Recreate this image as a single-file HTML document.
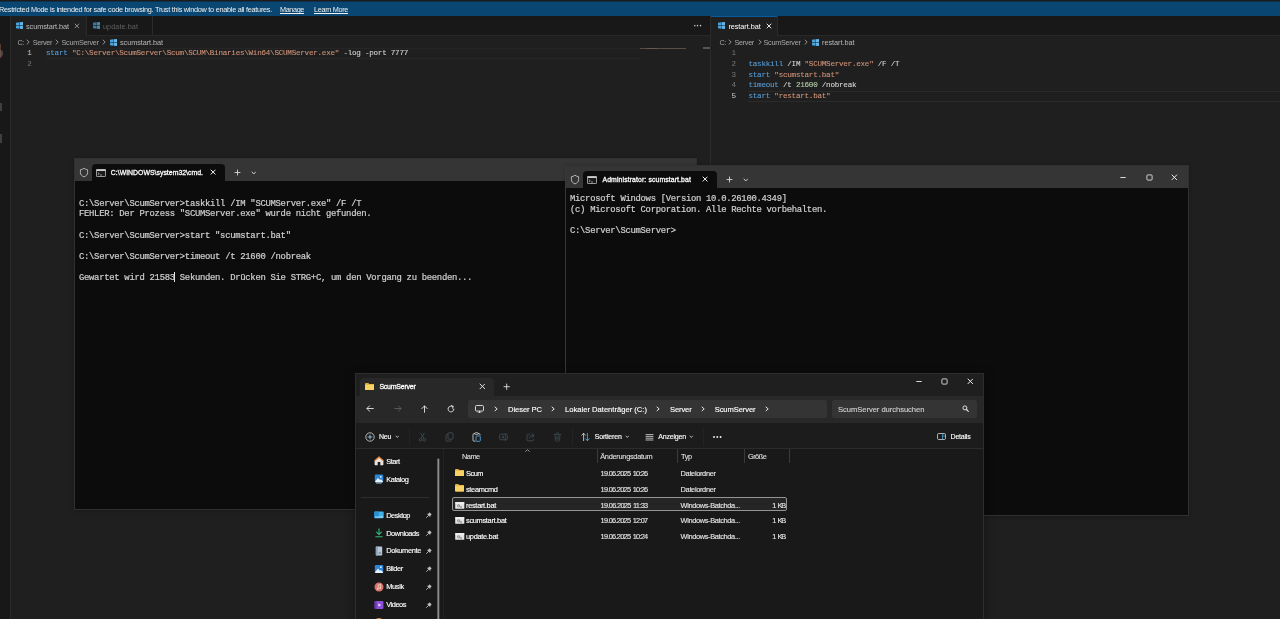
<!DOCTYPE html>
<html lang="de"><head><meta charset="utf-8"><title>ScumServer</title>
<style>
html,body{margin:0;padding:0;background:#1f1f1f;overflow:hidden}
body{position:relative;width:1280px;height:619px;overflow:hidden;font-family:'Liberation Sans', sans-serif}
div,svg,span.t{position:absolute;display:block}
span.t{white-space:pre}
#w{left:0;top:0;width:1280px;height:619px;will-change:transform}
</style></head><body><div id="w">
<div style="left:0px;top:0px;width:1280px;height:619px;background:#1f1f1f;"></div>
<div style="left:0px;top:0px;width:1280px;height:2px;background:#1b1b1b;"></div>
<div style="left:0px;top:1px;width:1280px;height:1px;background:#11304b;"></div>
<div style="left:0px;top:2px;width:1280px;height:14px;background:#094671;"></div>
<div style="left:0px;top:16px;width:10px;height:603px;background:#181818;"></div>
<div style="left:10px;top:16px;width:1px;height:603px;background:#2b2b2b;"></div>
<div style="left:0px;top:50px;width:3px;height:7px;background:#8a8a8a;border-radius:0 3px 3px 0;opacity:.4"></div>
<div style="left:0px;top:103px;width:2px;height:8px;background:#8a8a8a;opacity:.35"></div>
<div style="left:0px;top:134px;width:2px;height:9px;background:#8a8a8a;opacity:.35"></div>
<div style="left:0px;top:44px;width:1px;height:14px;background:#9a5a50;opacity:.5"></div>
<div style="left:11px;top:16px;width:1269px;height:19px;background:#181818;"></div>
<div style="left:11px;top:35px;width:1269px;height:1px;background:#282828;"></div>
<div style="left:11px;top:16px;width:75px;height:20px;background:#1f1f1f;"></div>
<div style="left:86px;top:16px;width:1px;height:19px;background:#2b2b2b;"></div>
<div style="left:152px;top:16px;width:1px;height:19px;background:#2b2b2b;"></div>
<div style="left:710px;top:16px;width:1px;height:603px;background:#2b2b2b;"></div>
<div style="left:711px;top:16px;width:66px;height:20px;background:#1f1f1f;"></div>
<div style="left:711px;top:16px;width:66px;height:1px;background:#0a5a9e;"></div>
<div style="left:777px;top:16px;width:1px;height:19px;background:#2b2b2b;"></div>
<div style="left:46px;top:47.5px;width:595px;height:1px;background:#252525;"></div>
<div style="left:46px;top:58px;width:595px;height:1px;background:#262626;"></div>
<div style="left:748px;top:90.5px;width:532px;height:1px;background:#2a2a2a;"></div>
<div style="left:748px;top:101px;width:532px;height:1px;background:#2a2a2a;"></div>
<div style="left:640px;top:48px;width:46px;height:1px;background:#5a4d48;"></div>
<div style="left:647px;top:48px;width:10px;height:1px;background:#6a5a52;"></div>
<div style="left:703px;top:47px;width:7px;height:2px;background:#555;"></div>
<span id="t0" class="t" style="left:-1px;top:5.44px;font-family:'Liberation Sans', sans-serif;font-size:7.3px;line-height:9.12px;color:#f0f0f0;letter-spacing:-0.2658px;">Restricted Mode is intended for safe code browsing. Trust this window to enable all features.</span>
<span id="t1" class="t" style="left:280px;top:5.44px;font-family:'Liberation Sans', sans-serif;font-size:7.3px;line-height:9.12px;color:#f0f0f0;letter-spacing:-0.3958px;text-decoration:underline;text-decoration-thickness:0.6px;text-underline-offset:0.8px;">Manage</span>
<span id="t2" class="t" style="left:314px;top:5.44px;font-family:'Liberation Sans', sans-serif;font-size:7.3px;line-height:9.12px;color:#f0f0f0;letter-spacing:-0.3328px;text-decoration:underline;text-decoration-thickness:0.6px;text-underline-offset:0.8px;">Learn More</span>
<svg style="left:16px;top:22.2px;opacity:1" width="7" height="7" viewBox="0 0 7 7"><path d="M0 0.84 L3.32 0.35000000000000003 V3.32 H0Z" fill="#4aa3dc"/><path d="M3.68 0.28 L7 0 V3.32 H3.68Z" fill="#62b6ea"/><path d="M0 3.68 H3.32 V6.6499999999999995 L0 6.16Z" fill="#4aa3dc"/><path d="M3.68 3.68 H7 V7 L3.68 6.72Z" fill="#62b6ea"/></svg>
<span id="t3" class="t" style="left:26px;top:22.44px;font-family:'Liberation Sans', sans-serif;font-size:7.3px;line-height:9.12px;color:#bdbdbd;letter-spacing:-0.0613px;">scumstart.bat</span>
<svg style="left:74.39999999999999px;top:23.400000000000002px;" width="5.8" height="5.8" viewBox="0 0 5.8 5.8"><path d="M1 1L4.8 4.8M4.8 1L1 4.8" stroke="#a8a8a8" stroke-width="0.8" fill="none" stroke-linecap="round"/></svg>
<svg style="left:93px;top:22.2px;opacity:0.7" width="7" height="7" viewBox="0 0 7 7"><path d="M0 0.84 L3.32 0.35000000000000003 V3.32 H0Z" fill="#4aa3dc"/><path d="M3.68 0.28 L7 0 V3.32 H3.68Z" fill="#62b6ea"/><path d="M0 3.68 H3.32 V6.6499999999999995 L0 6.16Z" fill="#4aa3dc"/><path d="M3.68 3.68 H7 V7 L3.68 6.72Z" fill="#62b6ea"/></svg>
<span id="t4" class="t" style="left:103px;top:22.44px;font-family:'Liberation Sans', sans-serif;font-size:7.3px;line-height:9.12px;color:#5f5f5f;letter-spacing:0.0500px;">update.bat</span>
<span id="t5" class="t" style="left:693.5px;top:20.88px;font-family:'Liberation Sans', sans-serif;font-size:9px;line-height:11.25px;color:#cccccc;font-weight:700;letter-spacing:-0.1667px;">···</span>
<svg style="left:718px;top:22.2px;opacity:1" width="7" height="7" viewBox="0 0 7 7"><path d="M0 0.84 L3.32 0.35000000000000003 V3.32 H0Z" fill="#4aa3dc"/><path d="M3.68 0.28 L7 0 V3.32 H3.68Z" fill="#62b6ea"/><path d="M0 3.68 H3.32 V6.6499999999999995 L0 6.16Z" fill="#4aa3dc"/><path d="M3.68 3.68 H7 V7 L3.68 6.72Z" fill="#62b6ea"/></svg>
<span id="t6" class="t" style="left:728.4px;top:22.44px;font-family:'Liberation Sans', sans-serif;font-size:7.3px;line-height:9.12px;color:#ffffff;letter-spacing:-0.0509px;">restart.bat</span>
<svg style="left:766.0px;top:23.3px;" width="6.0" height="6.0" viewBox="0 0 6.0 6.0"><path d="M1 1L5.0 5.0M5.0 1L1 5.0" stroke="#ffffff" stroke-width="0.9" fill="none" stroke-linecap="round"/></svg>
<span id="t7" class="t" style="left:17.5px;top:38.44px;font-family:'Liberation Sans', sans-serif;font-size:7.3px;line-height:9.12px;color:#a6a6a6;letter-spacing:-0.4062px;">C:</span>
<svg style="left:25.599999999999998px;top:39.1px;" width="4.2" height="6.2" viewBox="0 0 4.2 6.2"><path d="M1 1L3.2 3.1L1 5.2" stroke="#a6a6a6" stroke-width="0.85" fill="none" stroke-linecap="round" stroke-linejoin="round"/></svg>
<span id="t8" class="t" style="left:32.7px;top:38.44px;font-family:'Liberation Sans', sans-serif;font-size:7.3px;line-height:9.12px;color:#a6a6a6;letter-spacing:-0.3667px;">Server</span>
<svg style="left:54.9px;top:39.1px;" width="4.2" height="6.2" viewBox="0 0 4.2 6.2"><path d="M1 1L3.2 3.1L1 5.2" stroke="#a6a6a6" stroke-width="0.85" fill="none" stroke-linecap="round" stroke-linejoin="round"/></svg>
<span id="t9" class="t" style="left:61.5px;top:38.44px;font-family:'Liberation Sans', sans-serif;font-size:7.3px;line-height:9.12px;color:#a6a6a6;letter-spacing:-0.2856px;">ScumServer</span>
<svg style="left:101.60000000000001px;top:39.1px;" width="4.2" height="6.2" viewBox="0 0 4.2 6.2"><path d="M1 1L3.2 3.1L1 5.2" stroke="#a6a6a6" stroke-width="0.85" fill="none" stroke-linecap="round" stroke-linejoin="round"/></svg>
<svg style="left:109.5px;top:38.7px;opacity:1" width="7" height="7" viewBox="0 0 7 7"><path d="M0 0.84 L3.32 0.35000000000000003 V3.32 H0Z" fill="#4aa3dc"/><path d="M3.68 0.28 L7 0 V3.32 H3.68Z" fill="#62b6ea"/><path d="M0 3.68 H3.32 V6.6499999999999995 L0 6.16Z" fill="#4aa3dc"/><path d="M3.68 3.68 H7 V7 L3.68 6.72Z" fill="#62b6ea"/></svg>
<span id="t10" class="t" style="left:120px;top:38.44px;font-family:'Liberation Sans', sans-serif;font-size:7.3px;line-height:9.12px;color:#b8b8b8;letter-spacing:-0.0613px;">scumstart.bat</span>
<span id="t11" class="t" style="left:719.4px;top:38.44px;font-family:'Liberation Sans', sans-serif;font-size:7.3px;line-height:9.12px;color:#a6a6a6;letter-spacing:-0.5062px;">C:</span>
<svg style="left:727.9px;top:39.1px;" width="4.2" height="6.2" viewBox="0 0 4.2 6.2"><path d="M1 1L3.2 3.1L1 5.2" stroke="#a6a6a6" stroke-width="0.85" fill="none" stroke-linecap="round" stroke-linejoin="round"/></svg>
<span id="t12" class="t" style="left:734.4px;top:38.44px;font-family:'Liberation Sans', sans-serif;font-size:7.3px;line-height:9.12px;color:#a6a6a6;letter-spacing:-0.3167px;">Server</span>
<svg style="left:757.6px;top:39.1px;" width="4.2" height="6.2" viewBox="0 0 4.2 6.2"><path d="M1 1L3.2 3.1L1 5.2" stroke="#a6a6a6" stroke-width="0.85" fill="none" stroke-linecap="round" stroke-linejoin="round"/></svg>
<span id="t13" class="t" style="left:763.5px;top:38.44px;font-family:'Liberation Sans', sans-serif;font-size:7.3px;line-height:9.12px;color:#a6a6a6;letter-spacing:-0.3056px;">ScumServer</span>
<svg style="left:803.9px;top:39.1px;" width="4.2" height="6.2" viewBox="0 0 4.2 6.2"><path d="M1 1L3.2 3.1L1 5.2" stroke="#a6a6a6" stroke-width="0.85" fill="none" stroke-linecap="round" stroke-linejoin="round"/></svg>
<svg style="left:812px;top:38.7px;opacity:1" width="7" height="7" viewBox="0 0 7 7"><path d="M0 0.84 L3.32 0.35000000000000003 V3.32 H0Z" fill="#4aa3dc"/><path d="M3.68 0.28 L7 0 V3.32 H3.68Z" fill="#62b6ea"/><path d="M0 3.68 H3.32 V6.6499999999999995 L0 6.16Z" fill="#4aa3dc"/><path d="M3.68 3.68 H7 V7 L3.68 6.72Z" fill="#62b6ea"/></svg>
<span id="t14" class="t" style="left:822px;top:38.44px;font-family:'Liberation Sans', sans-serif;font-size:7.3px;line-height:9.12px;color:#b8b8b8;letter-spacing:-0.0327px;">restart.bat</span>
<span id="t15" class="t" style="right:1248.2px;top:49.45px;font-family:'Liberation Mono', monospace;font-size:7.6px;line-height:9.5px;color:#cccccc;">1</span>
<span id="t16" class="t" style="right:1248.2px;top:60.15px;font-family:'Liberation Mono', monospace;font-size:7.6px;line-height:9.5px;color:#777777;">2</span>
<span id="t17" class="t" style="left:46px;top:49.45px;font-family:'Liberation Mono', monospace;font-size:7.6px;line-height:9.5px;color:#d4d4d4;letter-spacing:-0.2475px;-webkit-text-stroke:0.1px;"><span style="color:#569cd6">start</span> <span style="color:#ce9178">"C:\Server\ScumServer\Scum\SCUM\Binaries\Win64\SCUMServer.exe"</span> -log -port 7777</span>
<span id="t18" class="t" style="right:544px;top:49.45px;font-family:'Liberation Mono', monospace;font-size:7.6px;line-height:9.5px;color:#777777;">1</span>
<span id="t19" class="t" style="right:544px;top:60.09px;font-family:'Liberation Mono', monospace;font-size:7.6px;line-height:9.5px;color:#777777;">2</span>
<span id="t20" class="t" style="right:544px;top:70.73px;font-family:'Liberation Mono', monospace;font-size:7.6px;line-height:9.5px;color:#777777;">3</span>
<span id="t21" class="t" style="right:544px;top:81.37px;font-family:'Liberation Mono', monospace;font-size:7.6px;line-height:9.5px;color:#777777;">4</span>
<span id="t22" class="t" style="right:544px;top:92.01px;font-family:'Liberation Mono', monospace;font-size:7.6px;line-height:9.5px;color:#cccccc;">5</span>
<span id="t23" class="t" style="left:748.5px;top:60.09px;font-family:'Liberation Mono', monospace;font-size:7.6px;line-height:9.5px;color:#d4d4d4;letter-spacing:-0.2480px;-webkit-text-stroke:0.1px;"><span style="color:#569cd6">taskkill</span> /IM <span style="color:#ce9178">"SCUMServer.exe"</span> /F /T</span>
<span id="t24" class="t" style="left:748.5px;top:70.73px;font-family:'Liberation Mono', monospace;font-size:7.6px;line-height:9.5px;color:#d4d4d4;letter-spacing:-0.2480px;-webkit-text-stroke:0.1px;"><span style="color:#569cd6">start</span> <span style="color:#ce9178">"scumstart.bat"</span></span>
<span id="t25" class="t" style="left:748.5px;top:81.37px;font-family:'Liberation Mono', monospace;font-size:7.6px;line-height:9.5px;color:#d4d4d4;letter-spacing:-0.2481px;-webkit-text-stroke:0.1px;"><span style="color:#569cd6">timeout</span> /t <span style="color:#b5cea8">21600</span> /nobreak</span>
<span id="t26" class="t" style="left:748.5px;top:92.01px;font-family:'Liberation Mono', monospace;font-size:7.6px;line-height:9.5px;color:#d4d4d4;letter-spacing:-0.2484px;-webkit-text-stroke:0.1px;"><span style="color:#569cd6">start</span> <span style="color:#ce9178">"restart.bat"</span></span>
<div style="left:74px;top:158px;width:623px;height:352px;background:#0c0c0c;box-shadow:0 0 0 1px #303030 inset, 0 1px 4px rgba(0,0,0,.2)"></div>
<div style="left:75px;top:159px;width:621px;height:22px;background:#353535;"></div>
<div style="left:92px;top:164px;width:133px;height:17.5px;background:#0c0c0c;border-radius:4px 4px 0 0"></div>
<svg style="left:78.8px;top:167.0px;" width="10" height="11" viewBox="0 0 10 11"><path d="M5 1.2C6.2 2.2 7.4 2.6 8.6 2.7V5.6C8.6 7.7 7.1 9.1 5 9.9C2.9 9.1 1.4 7.7 1.4 5.6V2.7C2.6 2.6 3.8 2.2 5 1.2Z" stroke="#d0d0d0" stroke-width="0.8" fill="none" stroke-linejoin="round"/></svg>
<svg style="left:96.2px;top:168.7px;" width="10" height="8" viewBox="0 0 10 8"><rect x="0.4" y="0.4" width="9.2" height="7.2" rx="0.8" fill="#1a1a1a" stroke="#cfcfcf" stroke-width="0.8"/><rect x="0.4" y="0.4" width="9.2" height="1.6" fill="#cfcfcf"/><path d="M1.8 3.6L3.3 4.7L1.8 5.8M4 6H6" stroke="#e0e0e0" stroke-width="0.6" fill="none"/></svg>
<span id="t27" class="t" style="left:110.8px;top:169.19px;font-family:'Liberation Sans', sans-serif;font-size:6.9px;line-height:8.62px;color:#ffffff;letter-spacing:0.0129px;-webkit-text-stroke:0.28px #fff;">C:\WINDOWS\system32\cmd.</span>
<svg style="left:210.20000000000002px;top:169.4px;" width="6.2" height="6.2" viewBox="0 0 6.2 6.2"><path d="M1 1L5.2 5.2M5.2 1L1 5.2" stroke="#f4f4f4" stroke-width="1.0" fill="none" stroke-linecap="round"/></svg>
<svg style="left:233.5px;top:169.0px;" width="7.0" height="7.0" viewBox="0 0 7.0 7.0"><path d="M3.5 1V6.0M1 3.5H6.0" stroke="#d8d8d8" stroke-width="0.9" fill="none" stroke-linecap="round"/></svg>
<svg style="left:250.79999999999998px;top:170.8px;" width="5.6" height="4.0" viewBox="0 0 5.6 4.0"><path d="M1 1L2.8 3.0L4.6 1" stroke="#d8d8d8" stroke-width="0.9" fill="none" stroke-linecap="round" stroke-linejoin="round"/></svg>
<span id="t28" class="t" style="left:79px;top:198.74px;font-family:'Liberation Mono', monospace;font-size:8.9px;line-height:11.12px;color:#d0d0d0;letter-spacing:-0.2859px;-webkit-text-stroke:0.2px #d0d0d0;">C:\Server\ScumServer&gt;taskkill /IM "SCUMServer.exe" /F /T</span>
<span id="t29" class="t" style="left:79px;top:209.34px;font-family:'Liberation Mono', monospace;font-size:8.9px;line-height:11.12px;color:#d0d0d0;letter-spacing:-0.2860px;-webkit-text-stroke:0.2px #d0d0d0;">FEHLER: Der Prozess "SCUMServer.exe" wurde nicht gefunden.</span>
<span id="t30" class="t" style="left:79px;top:230.54px;font-family:'Liberation Mono', monospace;font-size:8.9px;line-height:11.12px;color:#d0d0d0;letter-spacing:-0.2859px;-webkit-text-stroke:0.2px #d0d0d0;">C:\Server\ScumServer&gt;start "scumstart.bat"</span>
<span id="t31" class="t" style="left:79px;top:251.74px;font-family:'Liberation Mono', monospace;font-size:8.9px;line-height:11.12px;color:#d0d0d0;letter-spacing:-0.2861px;-webkit-text-stroke:0.2px #d0d0d0;">C:\Server\ScumServer&gt;timeout /t 21600 /nobreak</span>
<span id="t32" class="t" style="left:79px;top:272.94px;font-family:'Liberation Mono', monospace;font-size:8.9px;line-height:11.12px;color:#d0d0d0;letter-spacing:-0.2859px;-webkit-text-stroke:0.2px #d0d0d0;">Gewartet wird 21583 Sekunden. Drücken Sie STRG+C, um den Vorgang zu beenden...</span>
<div style="left:174.3px;top:271.5px;width:1px;height:10.5px;background:#e6e6e6;"></div>
<div style="left:565px;top:165px;width:624px;height:351px;background:#0c0c0c;box-shadow:0 0 0 1px #303030 inset, 0 1px 4px rgba(0,0,0,.2)"></div>
<div style="left:566px;top:166px;width:622px;height:22px;background:#353535;"></div>
<div style="left:583px;top:171px;width:134px;height:17.5px;background:#0c0c0c;border-radius:4px 4px 0 0"></div>
<svg style="left:569.8px;top:174.0px;" width="10" height="11" viewBox="0 0 10 11"><path d="M5 1.2C6.2 2.2 7.4 2.6 8.6 2.7V5.6C8.6 7.7 7.1 9.1 5 9.9C2.9 9.1 1.4 7.7 1.4 5.6V2.7C2.6 2.6 3.8 2.2 5 1.2Z" stroke="#d0d0d0" stroke-width="0.8" fill="none" stroke-linejoin="round"/></svg>
<svg style="left:587.2px;top:175.7px;" width="10" height="8" viewBox="0 0 10 8"><rect x="0.4" y="0.4" width="9.2" height="7.2" rx="0.8" fill="#1a1a1a" stroke="#cfcfcf" stroke-width="0.8"/><rect x="0.4" y="0.4" width="9.2" height="1.6" fill="#cfcfcf"/><path d="M1.8 3.6L3.3 4.7L1.8 5.8M4 6H6" stroke="#e0e0e0" stroke-width="0.6" fill="none"/></svg>
<span id="t33" class="t" style="left:602.5px;top:176.19px;font-family:'Liberation Sans', sans-serif;font-size:6.9px;line-height:8.62px;color:#ffffff;letter-spacing:0.0971px;-webkit-text-stroke:0.28px #fff;">Administrator: scumstart.bat</span>
<svg style="left:702.1999999999999px;top:176.4px;" width="6.2" height="6.2" viewBox="0 0 6.2 6.2"><path d="M1 1L5.2 5.2M5.2 1L1 5.2" stroke="#f4f4f4" stroke-width="1.0" fill="none" stroke-linecap="round"/></svg>
<svg style="left:725.5px;top:176.0px;" width="7.0" height="7.0" viewBox="0 0 7.0 7.0"><path d="M3.5 1V6.0M1 3.5H6.0" stroke="#d8d8d8" stroke-width="0.9" fill="none" stroke-linecap="round"/></svg>
<svg style="left:742.8000000000001px;top:177.8px;" width="5.6" height="4.0" viewBox="0 0 5.6 4.0"><path d="M1 1L2.8 3.0L4.6 1" stroke="#d8d8d8" stroke-width="0.9" fill="none" stroke-linecap="round" stroke-linejoin="round"/></svg>
<span id="t34" class="t" style="left:570px;top:194.34px;font-family:'Liberation Mono', monospace;font-size:8.9px;line-height:11.12px;color:#d0d0d0;letter-spacing:-0.2859px;-webkit-text-stroke:0.2px #d0d0d0;">Microsoft Windows [Version 10.0.26100.4349]</span>
<span id="t35" class="t" style="left:570px;top:204.94px;font-family:'Liberation Mono', monospace;font-size:8.9px;line-height:11.12px;color:#d0d0d0;letter-spacing:-0.2860px;-webkit-text-stroke:0.2px #d0d0d0;">(c) Microsoft Corporation. Alle Rechte vorbehalten.</span>
<span id="t36" class="t" style="left:570px;top:226.14px;font-family:'Liberation Mono', monospace;font-size:8.9px;line-height:11.12px;color:#d0d0d0;letter-spacing:-0.2859px;-webkit-text-stroke:0.2px #d0d0d0;">C:\Server\ScumServer&gt;</span>
<svg style="left:1120px;top:176.5px;" width="6" height="1" viewBox="0 0 6 1"><rect x="0.3" width="5.4" height="0.9" fill="#ececec"/></svg>
<svg style="left:1145.5px;top:173.5px;" width="7" height="7" viewBox="0 0 7 7"><rect x="0.9" y="0.9" width="5.2" height="5.2" rx="0.9" stroke="#ececec" stroke-width="0.85" fill="none"/></svg>
<svg style="left:1171.3500000000001px;top:173.65px;" width="6.7" height="6.7" viewBox="0 0 6.7 6.7"><path d="M1 1L5.7 5.7M5.7 1L1 5.7" stroke="#ececec" stroke-width="1.0" fill="none" stroke-linecap="round"/></svg>
<div style="left:565px;top:166px;width:1px;height:349px;background:#383838;"></div>
<div style="left:355px;top:373px;width:629px;height:260px;background:#191919;box-shadow:0 0 0 1px #2d2d2d inset, 0 2px 10px rgba(0,0,0,.35)"></div>
<div style="left:356px;top:374px;width:627px;height:22px;background:#1f1f1f;"></div>
<div style="left:360px;top:378px;width:134px;height:18px;background:#282828;border-radius:4px 4px 0 0"></div>
<div style="left:356px;top:396px;width:627px;height:27px;background:#282828;"></div>
<div style="left:356px;top:423px;width:627px;height:25px;background:#1c1c1c;"></div>
<div style="left:356px;top:448px;width:627px;height:1px;background:#2c2c2c;"></div>
<div style="left:467.5px;top:400px;width:359.5px;height:18px;background:#343434;border-radius:2.5px"></div>
<div style="left:832px;top:400px;width:145px;height:18px;background:#343434;border-radius:2.5px"></div>
<svg style="left:364.5px;top:382.6px;" width="9.5" height="7.5" viewBox="0 0 9.5 7.5"><path d="M0 1.1C0 .5 .5 0 1.1 0H3.3L4.3 1H8.5C9.0 1 9.5 1.5 9.5 2.1V6.5C9.5 7.0 9.0 7.5 8.5 7.5H1C.5 7.5 0 7.0 0 6.5Z" fill="#e3ad3a"/><path d="M0 2.6C0 2.1 .4 1.8 .9 1.8H8.6C9.1 1.8 9.5 2.1 9.5 2.6V6.5C9.5 7.0 9.0 7.5 8.5 7.5H1C.5 7.5 0 7.0 0 6.5Z" fill="#f7d367"/></svg>
<span id="t37" class="t" style="left:379.4px;top:383.32px;font-family:'Liberation Sans', sans-serif;font-size:7.0px;line-height:8.75px;color:#ffffff;letter-spacing:-0.2316px;-webkit-text-stroke:0.28px #fff;">ScumServer</span>
<svg style="left:478.6px;top:383.20000000000005px;" width="6.8" height="6.8" viewBox="0 0 6.8 6.8"><path d="M1 1L5.8 5.8M5.8 1L1 5.8" stroke="#f0f0f0" stroke-width="0.9" fill="none" stroke-linecap="round"/></svg>
<svg style="left:503.0px;top:382.90000000000003px;" width="7.4" height="7.4" viewBox="0 0 7.4 7.4"><path d="M3.7 1V6.4M1 3.7H6.4" stroke="#e0e0e0" stroke-width="0.9" fill="none" stroke-linecap="round"/></svg>
<svg style="left:916.4px;top:381.2px;" width="6" height="1" viewBox="0 0 6 1"><rect x="0.3" width="5.4" height="0.9" fill="#ececec"/></svg>
<svg style="left:941.0px;top:378.2px;" width="7" height="7" viewBox="0 0 7 7"><rect x="0.9" y="0.9" width="5.2" height="5.2" rx="0.9" stroke="#ececec" stroke-width="0.85" fill="none"/></svg>
<svg style="left:966.65px;top:378.34999999999997px;" width="6.7" height="6.7" viewBox="0 0 6.7 6.7"><path d="M1 1L5.7 5.7M5.7 1L1 5.7" stroke="#ececec" stroke-width="1.0" fill="none" stroke-linecap="round"/></svg>
<svg style="left:366px;top:405.2px;" width="8" height="7" viewBox="0 0 8 7"><path d="M7.3 3.5H1M3.6 .8L.9 3.5L3.6 6.2" stroke="#e8e8e8" stroke-width="0.9" fill="none" stroke-linecap="round" stroke-linejoin="round"/></svg>
<svg style="left:393.6px;top:405.2px;" width="8" height="7" viewBox="0 0 8 7"><path d="M.7 3.5H7M4.4 .8L7.1 3.5L4.4 6.2" stroke="#5e5e5e" stroke-width="0.9" fill="none" stroke-linecap="round" stroke-linejoin="round"/></svg>
<svg style="left:420.5px;top:404.7px;" width="7" height="8" viewBox="0 0 7 8"><path d="M3.5 7.3V1M.8 3.6L3.5 .9L6.2 3.6" stroke="#e8e8e8" stroke-width="0.9" fill="none" stroke-linecap="round" stroke-linejoin="round"/></svg>
<svg style="left:447px;top:404.7px;" width="8" height="8" viewBox="0 0 8 8"><path d="M6.9 4A2.9 2.9 0 1 1 5.6 1.6" stroke="#e8e8e8" stroke-width="0.9" fill="none" stroke-linecap="round"/><path d="M4.4 .6L6.3 1.3L5.6 3.2" stroke="#e8e8e8" stroke-width="0.9" fill="none" stroke-linecap="round" stroke-linejoin="round"/></svg>
<svg style="left:475px;top:404.5px;" width="9" height="8.5" viewBox="0 0 9 8.5"><rect x=".5" y=".5" width="8" height="5.6" rx="1.1" stroke="#e8e8e8" stroke-width="0.9" fill="none"/><path d="M3 8H6M4.5 6.2V8" stroke="#e8e8e8" stroke-width="0.9" fill="none" stroke-linecap="round"/></svg>
<svg style="left:493.9px;top:406.0px;" width="4.2" height="5.8" viewBox="0 0 4.2 5.8"><path d="M1 1L3.2 2.9L1 4.8" stroke="#e6e6e6" stroke-width="1.0" fill="none" stroke-linecap="round" stroke-linejoin="round"/></svg>
<svg style="left:551.1999999999999px;top:406.0px;" width="4.2" height="5.8" viewBox="0 0 4.2 5.8"><path d="M1 1L3.2 2.9L1 4.8" stroke="#e6e6e6" stroke-width="1.0" fill="none" stroke-linecap="round" stroke-linejoin="round"/></svg>
<svg style="left:656.3px;top:406.0px;" width="4.2" height="5.8" viewBox="0 0 4.2 5.8"><path d="M1 1L3.2 2.9L1 4.8" stroke="#e6e6e6" stroke-width="1.0" fill="none" stroke-linecap="round" stroke-linejoin="round"/></svg>
<svg style="left:700.9px;top:406.0px;" width="4.2" height="5.8" viewBox="0 0 4.2 5.8"><path d="M1 1L3.2 2.9L1 4.8" stroke="#e6e6e6" stroke-width="1.0" fill="none" stroke-linecap="round" stroke-linejoin="round"/></svg>
<svg style="left:765.3px;top:406.0px;" width="4.2" height="5.8" viewBox="0 0 4.2 5.8"><path d="M1 1L3.2 2.9L1 4.8" stroke="#e6e6e6" stroke-width="1.0" fill="none" stroke-linecap="round" stroke-linejoin="round"/></svg>
<span id="t38" class="t" style="left:508px;top:404.95px;font-family:'Liberation Sans', sans-serif;font-size:7.6px;line-height:9.5px;color:#ffffff;letter-spacing:-0.0677px;-webkit-text-stroke:0.13px;">Dieser PC</span>
<span id="t39" class="t" style="left:565px;top:404.95px;font-family:'Liberation Sans', sans-serif;font-size:7.6px;line-height:9.5px;color:#ffffff;letter-spacing:0.0046px;-webkit-text-stroke:0.13px;">Lokaler Datenträger (C:)</span>
<span id="t40" class="t" style="left:670px;top:404.95px;font-family:'Liberation Sans', sans-serif;font-size:7.6px;line-height:9.5px;color:#ffffff;letter-spacing:-0.1292px;-webkit-text-stroke:0.13px;">Server</span>
<span id="t41" class="t" style="left:714.7px;top:404.95px;font-family:'Liberation Sans', sans-serif;font-size:7.6px;line-height:9.5px;color:#ffffff;letter-spacing:-0.0981px;-webkit-text-stroke:0.13px;">ScumServer</span>
<span id="t42" class="t" style="left:838px;top:404.95px;font-family:'Liberation Sans', sans-serif;font-size:7.6px;line-height:9.5px;color:#cfcfcf;letter-spacing:-0.0443px;-webkit-text-stroke:0.13px;">ScumServer durchsuchen</span>
<svg style="left:962.4px;top:405.2px;" width="8" height="8" viewBox="0 0 8 8"><circle cx="2.9" cy="2.9" r="2" stroke="#e8e8e8" stroke-width="0.95" fill="none"/><path d="M4.5 4.5L6.3 6.3" stroke="#e8e8e8" stroke-width="1.1" stroke-linecap="round"/></svg>
<svg style="left:364.5px;top:431.5px;" width="10" height="10" viewBox="0 0 10 10"><circle cx="5" cy="5" r="4.2" stroke="#d8d8d8" stroke-width="0.8" fill="none"/><path d="M5 3V7M3 5H7" stroke="#a8d8f4" stroke-width="0.8" stroke-linecap="round"/></svg>
<span id="t43" class="t" style="left:379px;top:433.12px;font-family:'Liberation Sans', sans-serif;font-size:7.0px;line-height:8.75px;color:#ffffff;letter-spacing:-0.2812px;-webkit-text-stroke:0.13px;">Neu</span>
<svg style="left:394.7px;top:435.05px;" width="4.6" height="3.5" viewBox="0 0 4.6 3.5"><path d="M1 1L2.3 2.5L3.6 1" stroke="#cfcfcf" stroke-width="0.8" fill="none" stroke-linecap="round" stroke-linejoin="round"/></svg>
<div style="left:408.5px;top:427px;width:1px;height:19px;background:#232323;"></div>
<svg style="left:418.3px;top:431.5px;" width="9" height="10" viewBox="0 0 9 10"><path d="M2.5 .8L6 6.6M6.5 .8L3 6.6" stroke="#425258" stroke-width="0.8"/><circle cx="2.6" cy="7.8" r="1.3" stroke="#425258" stroke-width="0.8" fill="none"/><circle cx="6.4" cy="7.8" r="1.3" stroke="#425258" stroke-width="0.8" fill="none"/></svg>
<svg style="left:445.2px;top:431.5px;" width="9" height="10" viewBox="0 0 9 10"><rect x="3" y=".8" width="5" height="6.4" rx="1" stroke="#425258" stroke-width="0.8" fill="none"/><path d="M3 2.6H2C1.4 2.6 1 3 1 3.6V8.2C1 8.8 1.4 9.2 2 9.2H5C5.6 9.2 6 8.8 6 8.2V7.3" stroke="#425258" stroke-width="0.8" fill="none"/></svg>
<svg style="left:472.2px;top:431.5px;" width="9" height="10" viewBox="0 0 9 10"><path d="M3 1.6H2C1.4 1.6 1 2 1 2.6V8.2C1 8.8 1.4 9.2 2 9.2H3.4M6 1.6H7C7.6 1.6 8 2 8 2.6V3.4" stroke="#e0e0e0" stroke-width="0.8" fill="none"/><rect x="2.8" y=".7" width="3.4" height="1.7" rx=".6" stroke="#e0e0e0" stroke-width="0.7" fill="none"/><rect x="4" y="4" width="4.3" height="5.3" rx=".8" stroke="#58b4e8" stroke-width="0.8" fill="none"/></svg>
<svg style="left:499.1px;top:431.5px;" width="9" height="10" viewBox="0 0 9 10"><rect x=".6" y="2.2" width="7.8" height="5.6" rx="1.2" stroke="#425258" stroke-width="0.8" fill="none"/><path d="M3 6.3L4 3.7L5 6.3M3.4 5.4H4.6M6.6 1V9" stroke="#425258" stroke-width="0.7" fill="none"/></svg>
<svg style="left:526.0px;top:431.5px;" width="9" height="10" viewBox="0 0 9 10"><path d="M4 2.2H2.2C1.5 2.2 1 2.7 1 3.4V7.6C1 8.3 1.5 8.8 2.2 8.8H6.4C7.1 8.8 7.6 8.3 7.6 7.6V7" stroke="#425258" stroke-width="0.8" fill="none"/><path d="M5.6 1.2L8.2 3.6L5.6 6M8 3.6H6C4.4 3.6 3.4 4.6 3.2 6.4" stroke="#425258" stroke-width="0.8" fill="none" stroke-linejoin="round"/></svg>
<svg style="left:552.5px;top:431.5px;" width="9" height="10" viewBox="0 0 9 10"><path d="M1.2 2.4H7.8M3.4 2.2V1.4C3.4 1 3.7 .8 4 .8H5C5.3 .8 5.6 1 5.6 1.4V2.2M2 2.6L2.5 8.4C2.5 8.9 2.9 9.2 3.3 9.2H5.7C6.1 9.2 6.5 8.9 6.5 8.4L7 2.6M3.8 4.2V7.4M5.2 4.2V7.4" stroke="#425258" stroke-width="0.7" fill="none" stroke-linecap="round"/></svg>
<div style="left:572px;top:427px;width:1px;height:19px;background:#232323;"></div>
<svg style="left:580.8px;top:431.5px;" width="9" height="10" viewBox="0 0 9 10"><path d="M2.6 8.6V1.4M.8 3.2L2.6 1.3L4.4 3.2" stroke="#e0e0e0" stroke-width="0.8" fill="none" stroke-linecap="round" stroke-linejoin="round"/><path d="M6.4 1.4V8.6M4.6 6.8L6.4 8.7L8.2 6.8" stroke="#58b4e8" stroke-width="0.8" fill="none" stroke-linecap="round" stroke-linejoin="round"/></svg>
<span id="t44" class="t" style="left:594.7px;top:433.12px;font-family:'Liberation Sans', sans-serif;font-size:7.0px;line-height:8.75px;color:#ffffff;letter-spacing:-0.1562px;-webkit-text-stroke:0.13px;">Sortieren</span>
<svg style="left:624.7px;top:435.05px;" width="4.6" height="3.5" viewBox="0 0 4.6 3.5"><path d="M1 1L2.3 2.5L3.6 1" stroke="#cfcfcf" stroke-width="0.8" fill="none" stroke-linecap="round" stroke-linejoin="round"/></svg>
<svg style="left:644.9px;top:431.5px;" width="9" height="10" viewBox="0 0 9 10"><path d="M.6 2.6H8.4M.6 4.4H8.4M.6 6.2H8.4M.6 8H8.4" stroke="#b8b8b8" stroke-width="1"/></svg>
<span id="t45" class="t" style="left:658.3px;top:433.12px;font-family:'Liberation Sans', sans-serif;font-size:7.0px;line-height:8.75px;color:#ffffff;letter-spacing:-0.1879px;-webkit-text-stroke:0.13px;">Anzeigen</span>
<svg style="left:689.0px;top:435.05px;" width="4.6" height="3.5" viewBox="0 0 4.6 3.5"><path d="M1 1L2.3 2.5L3.6 1" stroke="#cfcfcf" stroke-width="0.8" fill="none" stroke-linecap="round" stroke-linejoin="round"/></svg>
<div style="left:702.5px;top:427px;width:1px;height:19px;background:#232323;"></div>
<svg style="left:712.6px;top:435.5px;" width="9" height="2" viewBox="0 0 9 2"><circle cx="1" cy="1" r=".95" fill="#f4f4f4"/><circle cx="4.3" cy="1" r=".95" fill="#f4f4f4"/><circle cx="7.6" cy="1" r=".95" fill="#f4f4f4"/></svg>
<svg style="left:937px;top:433.0px;" width="9" height="7" viewBox="0 0 9 7"><rect x=".5" y=".5" width="8" height="6" rx="1.2" stroke="#d8d8d8" stroke-width="0.8" fill="none"/><path d="M5.6 .6V6.4" stroke="#58b4e8" stroke-width="0.8"/><path d="M6.4 2.3H7.6M6.4 3.5H7.6" stroke="#58b4e8" stroke-width="0.6"/></svg>
<span id="t46" class="t" style="left:950.6px;top:433.12px;font-family:'Liberation Sans', sans-serif;font-size:7.0px;line-height:8.75px;color:#ffffff;letter-spacing:-0.2152px;-webkit-text-stroke:0.13px;">Details</span>
<div style="left:360.5px;top:497px;width:68.5px;height:1px;background:#2d2d2d;"></div>
<svg style="left:436px;top:458px;" width="4" height="170" viewBox="0 0 4 170"><rect x="1.4" y="0.6" width="1.9" height="175" rx="0.9" fill="#8e8e8e"/></svg>
<div style="left:443px;top:449px;width:1px;height:170px;background:#222;"></div>
<svg style="left:374px;top:456px;" width="10" height="10" viewBox="0 0 10 10"><path d="M5 .8L9.4 4.6V8.6C9.4 9 9.1 9.3 8.7 9.3H6.3V6H3.7V9.3H1.3C.9 9.3 .6 9 .6 8.6V4.6Z" fill="#e8e2dc"/><path d="M5 .3L9.8 4.5L9 5.3L5 1.9L1 5.3L.2 4.5Z" fill="#e8853a"/></svg>
<span id="t47" class="t" style="left:386.2px;top:457.18px;font-family:'Liberation Sans', sans-serif;font-size:7.4px;line-height:9.25px;color:#ffffff;letter-spacing:-0.4619px;-webkit-text-stroke:0.13px;">Start</span>
<svg style="left:374px;top:474px;" width="10" height="10" viewBox="0 0 10 10"><rect x=".8" y=".6" width="8.4" height="7.6" rx="1.2" fill="#2f86d6"/><path d="M1.2 7.2L4 4L6 6L7 5.2L9 7.4V8.2H1.2Z" fill="#e8f2ff"/><circle cx="6.8" cy="2.8" r=".9" fill="#e8f2ff"/><rect x="2" y="8.6" width="6" height=".9" rx=".4" fill="#9cc8f0"/></svg>
<span id="t48" class="t" style="left:386.2px;top:475.18px;font-family:'Liberation Sans', sans-serif;font-size:7.4px;line-height:9.25px;color:#ffffff;letter-spacing:-0.3969px;-webkit-text-stroke:0.13px;">Katalog</span>
<svg style="left:374px;top:510.20000000000005px;" width="10" height="10" viewBox="0 0 10 10"><rect x=".3" y="1.6" width="9.4" height="6.6" rx=".9" fill="#3fb2ea"/><rect x=".3" y="1.6" width="4.5" height="6.6" rx=".9" fill="#2a8fd2"/><rect x="1" y="6.6" width="8" height=".9" fill="#bfe6fa"/></svg>
<span id="t49" class="t" style="left:386.2px;top:510.88px;font-family:'Liberation Sans', sans-serif;font-size:7.4px;line-height:9.25px;color:#ffffff;letter-spacing:-0.4750px;-webkit-text-stroke:0.13px;">Desktop</span>
<svg style="left:425.5px;top:512.2px;" width="6" height="6" viewBox="0 0 6 6"><path d="M3.5 .2L5.8 2.5L4.8 3L4.1 5L1 1.9L3 1.2Z" fill="#bdbdbd"/><path d="M2.5 3.5L.5 5.5" stroke="#bdbdbd" stroke-width=".9" stroke-linecap="round"/></svg>
<svg style="left:374px;top:528px;" width="10" height="10" viewBox="0 0 10 10"><path d="M5 .8V6.4M2.6 4.2L5 6.6L7.4 4.2" stroke="#35b777" stroke-width="1.1" fill="none" stroke-linecap="round" stroke-linejoin="round"/><path d="M1.8 8.8H8.2" stroke="#35b777" stroke-width="1.1" stroke-linecap="round"/></svg>
<span id="t50" class="t" style="left:386.2px;top:528.88px;font-family:'Liberation Sans', sans-serif;font-size:7.4px;line-height:9.25px;color:#ffffff;letter-spacing:-0.4198px;-webkit-text-stroke:0.13px;">Downloads</span>
<svg style="left:425.5px;top:530px;" width="6" height="6" viewBox="0 0 6 6"><path d="M3.5 .2L5.8 2.5L4.8 3L4.1 5L1 1.9L3 1.2Z" fill="#bdbdbd"/><path d="M2.5 3.5L.5 5.5" stroke="#bdbdbd" stroke-width=".9" stroke-linecap="round"/></svg>
<svg style="left:374px;top:545.9px;" width="10" height="10" viewBox="0 0 10 10"><rect x="1.8" y=".5" width="6.4" height="9" rx=".9" fill="#b9c8d6"/><rect x="1.8" y=".5" width="2" height="9" rx=".6" fill="#8fa3b8"/><path d="M4.6 6.4H7.2M4.6 7.6H7.2" stroke="#5d7288" stroke-width=".6"/></svg>
<span id="t51" class="t" style="left:386.2px;top:545.98px;font-family:'Liberation Sans', sans-serif;font-size:7.4px;line-height:9.25px;color:#ffffff;letter-spacing:-0.3330px;-webkit-text-stroke:0.13px;">Dokumente</span>
<svg style="left:425.5px;top:547.9px;" width="6" height="6" viewBox="0 0 6 6"><path d="M3.5 .2L5.8 2.5L4.8 3L4.1 5L1 1.9L3 1.2Z" fill="#bdbdbd"/><path d="M2.5 3.5L.5 5.5" stroke="#bdbdbd" stroke-width=".9" stroke-linecap="round"/></svg>
<svg style="left:374px;top:563.8px;" width="10" height="10" viewBox="0 0 10 10"><rect x=".8" y="1" width="8.4" height="8" rx="1.2" fill="#2f86d6"/><path d="M1.2 8L4 4.6L6 6.8L7 6L9 8.2V9H1.2Z" fill="#e8f2ff"/><circle cx="6.8" cy="3.2" r=".9" fill="#e8f2ff"/></svg>
<span id="t52" class="t" style="left:386.2px;top:563.98px;font-family:'Liberation Sans', sans-serif;font-size:7.4px;line-height:9.25px;color:#ffffff;letter-spacing:-0.3510px;-webkit-text-stroke:0.13px;">Bilder</span>
<svg style="left:425.5px;top:565.8px;" width="6" height="6" viewBox="0 0 6 6"><path d="M3.5 .2L5.8 2.5L4.8 3L4.1 5L1 1.9L3 1.2Z" fill="#bdbdbd"/><path d="M2.5 3.5L.5 5.5" stroke="#bdbdbd" stroke-width=".9" stroke-linecap="round"/></svg>
<svg style="left:374px;top:581.6px;" width="10" height="10" viewBox="0 0 10 10"><circle cx="5" cy="5" r="4.5" fill="#d9746a"/><path d="M4.2 6.8V3L6.6 2.4V6.2" stroke="#fbe3dc" stroke-width=".7" fill="none"/><circle cx="3.6" cy="6.9" r=".8" fill="#fbe3dc"/><circle cx="6" cy="6.3" r=".8" fill="#fbe3dc"/></svg>
<span id="t53" class="t" style="left:386.2px;top:581.98px;font-family:'Liberation Sans', sans-serif;font-size:7.4px;line-height:9.25px;color:#ffffff;letter-spacing:-0.3025px;-webkit-text-stroke:0.13px;">Musik</span>
<svg style="left:425.5px;top:583.6px;" width="6" height="6" viewBox="0 0 6 6"><path d="M3.5 .2L5.8 2.5L4.8 3L4.1 5L1 1.9L3 1.2Z" fill="#bdbdbd"/><path d="M2.5 3.5L.5 5.5" stroke="#bdbdbd" stroke-width=".9" stroke-linecap="round"/></svg>
<svg style="left:374px;top:599.5px;" width="10" height="10" viewBox="0 0 10 10"><rect x=".6" y="1" width="8.8" height="8" rx="1.2" fill="#8c4fd8"/><rect x=".6" y="1" width="2" height="8" rx=".8" fill="#6a35b0"/><path d="M4.4 3.4L7.2 5L4.4 6.6Z" fill="#f0e4ff"/></svg>
<span id="t54" class="t" style="left:386.2px;top:599.98px;font-family:'Liberation Sans', sans-serif;font-size:7.4px;line-height:9.25px;color:#ffffff;letter-spacing:-0.4448px;-webkit-text-stroke:0.13px;">Videos</span>
<svg style="left:425.5px;top:601.5px;" width="6" height="6" viewBox="0 0 6 6"><path d="M3.5 .2L5.8 2.5L4.8 3L4.1 5L1 1.9L3 1.2Z" fill="#bdbdbd"/><path d="M2.5 3.5L.5 5.5" stroke="#bdbdbd" stroke-width=".9" stroke-linecap="round"/></svg>
<svg style="left:374px;top:617px;" width="10" height="10" viewBox="0 0 10 10"><circle cx="5" cy="5" r="4" fill="#e8853a"/></svg>
<span id="t55" class="t" style="left:462px;top:452.07px;font-family:'Liberation Sans', sans-serif;font-size:7.4px;line-height:9.25px;color:#dedede;letter-spacing:-0.5297px;-webkit-text-stroke:0.13px;">Name</span>
<span id="t56" class="t" style="left:600.2px;top:452.07px;font-family:'Liberation Sans', sans-serif;font-size:7.4px;line-height:9.25px;color:#dedede;letter-spacing:-0.2855px;-webkit-text-stroke:0.13px;">Änderungsdatum</span>
<span id="t57" class="t" style="left:681px;top:452.07px;font-family:'Liberation Sans', sans-serif;font-size:7.4px;line-height:9.25px;color:#dedede;letter-spacing:-0.3740px;-webkit-text-stroke:0.13px;">Typ</span>
<span id="t58" class="t" style="left:747.9px;top:452.07px;font-family:'Liberation Sans', sans-serif;font-size:7.4px;line-height:9.25px;color:#dedede;letter-spacing:-0.5106px;-webkit-text-stroke:0.13px;">Größe</span>
<div style="left:597px;top:449px;width:1px;height:13.5px;background:#3a3a3a;"></div>
<div style="left:676.6px;top:449px;width:1px;height:13.5px;background:#3a3a3a;"></div>
<div style="left:744px;top:449px;width:1px;height:13.5px;background:#3a3a3a;"></div>
<div style="left:788.6px;top:449px;width:1px;height:13.5px;background:#3a3a3a;"></div>
<svg style="left:524.9px;top:449.3px;" width="5" height="3" viewBox="0 0 5 3"><path d="M.6 2.4L2.5 .7L4.4 2.4" stroke="#bdbdbd" stroke-width=".7" fill="none" stroke-linecap="round" stroke-linejoin="round"/></svg>
<div style="left:452px;top:497px;width:335px;height:14.4px;background:#252525;border:1px solid #949494;border-radius:2px;box-sizing:border-box"></div>
<svg style="left:454.7px;top:468.8px;" width="9.5" height="7.5" viewBox="0 0 9.5 7.5"><path d="M0 1.1C0 .5 .5 0 1.1 0H3.3L4.3 1H8.5C9.0 1 9.5 1.5 9.5 2.1V6.5C9.5 7.0 9.0 7.5 8.5 7.5H1C.5 7.5 0 7.0 0 6.5Z" fill="#e3ad3a"/><path d="M0 2.6C0 2.1 .4 1.8 .9 1.8H8.6C9.1 1.8 9.5 2.1 9.5 2.6V6.5C9.5 7.0 9.0 7.5 8.5 7.5H1C.5 7.5 0 7.0 0 6.5Z" fill="#f7d367"/></svg>
<span id="t59" class="t" style="left:466px;top:469.18px;font-family:'Liberation Sans', sans-serif;font-size:7.4px;line-height:9.25px;color:#ffffff;letter-spacing:-0.4766px;-webkit-text-stroke:0.13px;">Scum</span>
<span id="t60" class="t" style="left:600.6px;top:469.18px;font-family:'Liberation Sans', sans-serif;font-size:7.4px;line-height:9.25px;color:#e4e4e4;letter-spacing:-0.7279px;word-spacing:1px;-webkit-text-stroke:0.13px;">19.06.2025 10:26</span>
<span id="t61" class="t" style="left:680.6px;top:469.18px;font-family:'Liberation Sans', sans-serif;font-size:7.4px;line-height:9.25px;color:#e4e4e4;letter-spacing:-0.3295px;-webkit-text-stroke:0.13px;">Dateiordner</span>
<svg style="left:454.7px;top:484.48px;" width="9.5" height="7.5" viewBox="0 0 9.5 7.5"><path d="M0 1.1C0 .5 .5 0 1.1 0H3.3L4.3 1H8.5C9.0 1 9.5 1.5 9.5 2.1V6.5C9.5 7.0 9.0 7.5 8.5 7.5H1C.5 7.5 0 7.0 0 6.5Z" fill="#e3ad3a"/><path d="M0 2.6C0 2.1 .4 1.8 .9 1.8H8.6C9.1 1.8 9.5 2.1 9.5 2.6V6.5C9.5 7.0 9.0 7.5 8.5 7.5H1C.5 7.5 0 7.0 0 6.5Z" fill="#f7d367"/></svg>
<span id="t62" class="t" style="left:466px;top:484.86px;font-family:'Liberation Sans', sans-serif;font-size:7.4px;line-height:9.25px;color:#ffffff;letter-spacing:-0.3242px;-webkit-text-stroke:0.13px;">steamcmd</span>
<span id="t63" class="t" style="left:600.6px;top:484.86px;font-family:'Liberation Sans', sans-serif;font-size:7.4px;line-height:9.25px;color:#e4e4e4;letter-spacing:-0.7279px;word-spacing:1px;-webkit-text-stroke:0.13px;">19.06.2025 10:26</span>
<span id="t64" class="t" style="left:680.6px;top:484.86px;font-family:'Liberation Sans', sans-serif;font-size:7.4px;line-height:9.25px;color:#e4e4e4;letter-spacing:-0.3295px;-webkit-text-stroke:0.13px;">Dateiordner</span>
<svg style="left:455px;top:501.66px;" width="9.5" height="7" viewBox="0 0 9.5 7"><rect x=".2" y=".2" width="9.1" height="6.6" rx=".6" fill="#e4e4e4"/><rect x=".2" y=".2" width="9.1" height="1.3" fill="#fafafa"/><circle cx="3.6" cy="3.8" r="1.5" fill="#8a8a8a"/><circle cx="3.6" cy="3.8" r=".6" fill="#e4e4e4"/><circle cx="6" cy="5" r="1" fill="#9a9a9a"/></svg>
<span id="t65" class="t" style="left:466px;top:500.54px;font-family:'Liberation Sans', sans-serif;font-size:7.4px;line-height:9.25px;color:#ffffff;letter-spacing:-0.2983px;-webkit-text-stroke:0.13px;">restart.bat</span>
<span id="t66" class="t" style="left:600.6px;top:500.54px;font-family:'Liberation Sans', sans-serif;font-size:7.4px;line-height:9.25px;color:#e4e4e4;letter-spacing:-0.6938px;word-spacing:1px;-webkit-text-stroke:0.13px;">19.06.2025 11:33</span>
<span id="t67" class="t" style="left:680.6px;top:500.54px;font-family:'Liberation Sans', sans-serif;font-size:7.4px;line-height:9.25px;color:#e4e4e4;letter-spacing:-0.3519px;-webkit-text-stroke:0.13px;">Windows-Batchda...</span>
<span id="t68" class="t" style="left:772.3px;top:500.54px;font-family:'Liberation Sans', sans-serif;font-size:7.4px;line-height:9.25px;color:#e4e4e4;letter-spacing:-1.2078px;word-spacing:1.5px;-webkit-text-stroke:0.13px;">1 KB</span>
<svg style="left:455px;top:517.34px;" width="9.5" height="7" viewBox="0 0 9.5 7"><rect x=".2" y=".2" width="9.1" height="6.6" rx=".6" fill="#e4e4e4"/><rect x=".2" y=".2" width="9.1" height="1.3" fill="#fafafa"/><circle cx="3.6" cy="3.8" r="1.5" fill="#8a8a8a"/><circle cx="3.6" cy="3.8" r=".6" fill="#e4e4e4"/><circle cx="6" cy="5" r="1" fill="#9a9a9a"/></svg>
<span id="t69" class="t" style="left:466px;top:516.22px;font-family:'Liberation Sans', sans-serif;font-size:7.4px;line-height:9.25px;color:#ffffff;letter-spacing:-0.2969px;-webkit-text-stroke:0.13px;">scumstart.bat</span>
<span id="t70" class="t" style="left:600.6px;top:516.22px;font-family:'Liberation Sans', sans-serif;font-size:7.4px;line-height:9.25px;color:#e4e4e4;letter-spacing:-0.7279px;word-spacing:1px;-webkit-text-stroke:0.13px;">19.06.2025 12:07</span>
<span id="t71" class="t" style="left:680.6px;top:516.22px;font-family:'Liberation Sans', sans-serif;font-size:7.4px;line-height:9.25px;color:#e4e4e4;letter-spacing:-0.3519px;-webkit-text-stroke:0.13px;">Windows-Batchda...</span>
<span id="t72" class="t" style="left:772.3px;top:516.22px;font-family:'Liberation Sans', sans-serif;font-size:7.4px;line-height:9.25px;color:#e4e4e4;letter-spacing:-1.2078px;word-spacing:1.5px;-webkit-text-stroke:0.13px;">1 KB</span>
<svg style="left:455px;top:533.02px;" width="9.5" height="7" viewBox="0 0 9.5 7"><rect x=".2" y=".2" width="9.1" height="6.6" rx=".6" fill="#e4e4e4"/><rect x=".2" y=".2" width="9.1" height="1.3" fill="#fafafa"/><circle cx="3.6" cy="3.8" r="1.5" fill="#8a8a8a"/><circle cx="3.6" cy="3.8" r=".6" fill="#e4e4e4"/><circle cx="6" cy="5" r="1" fill="#9a9a9a"/></svg>
<span id="t73" class="t" style="left:466px;top:531.89px;font-family:'Liberation Sans', sans-serif;font-size:7.4px;line-height:9.25px;color:#ffffff;letter-spacing:-0.2938px;-webkit-text-stroke:0.13px;">update.bat</span>
<span id="t74" class="t" style="left:600.6px;top:531.89px;font-family:'Liberation Sans', sans-serif;font-size:7.4px;line-height:9.25px;color:#e4e4e4;letter-spacing:-0.7279px;word-spacing:1px;-webkit-text-stroke:0.13px;">19.06.2025 10:24</span>
<span id="t75" class="t" style="left:680.6px;top:531.89px;font-family:'Liberation Sans', sans-serif;font-size:7.4px;line-height:9.25px;color:#e4e4e4;letter-spacing:-0.3519px;-webkit-text-stroke:0.13px;">Windows-Batchda...</span>
<span id="t76" class="t" style="left:772.3px;top:531.89px;font-family:'Liberation Sans', sans-serif;font-size:7.4px;line-height:9.25px;color:#e4e4e4;letter-spacing:-1.2078px;word-spacing:1.5px;-webkit-text-stroke:0.13px;">1 KB</span>
</div></body></html>
